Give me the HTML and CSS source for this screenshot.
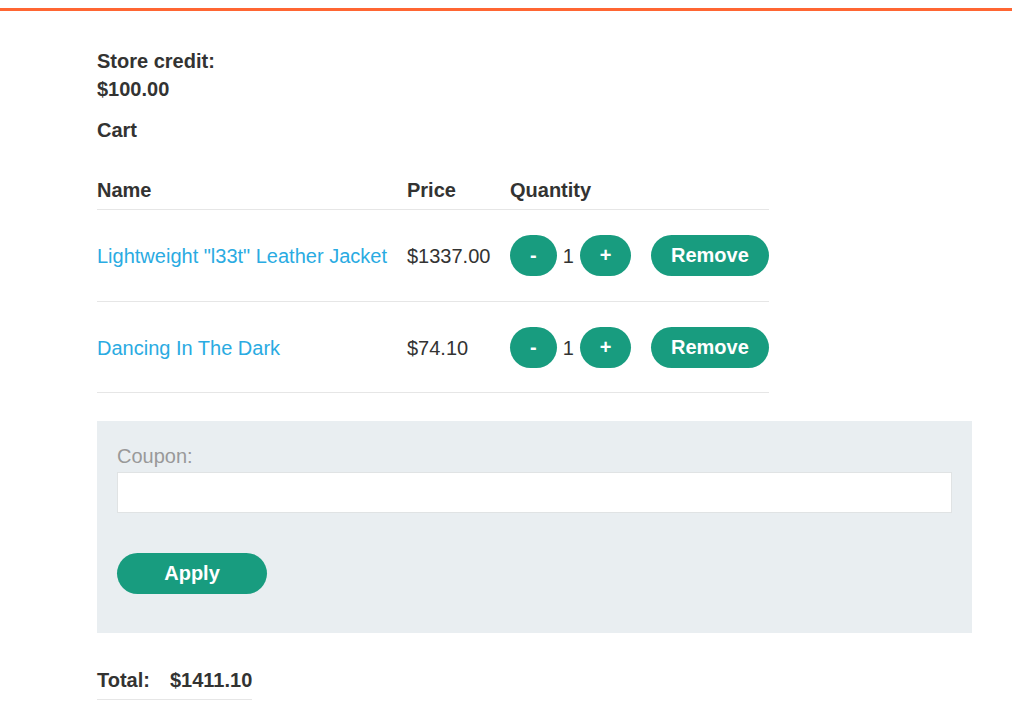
FILE: index.html
```html
<!DOCTYPE html>
<html>
<head>
<meta charset="utf-8">
<link rel="stylesheet" href="styles.css">
</head>
<body>
<div class="topbar"></div>
<main class="container">
  <div class="credit">
    <div>Store credit:</div>
    <div>$100.00</div>
  </div>
  <div class="cart-title">Cart</div>
  <table class="cart">
    <thead>
      <tr>
        <th class="c-name">Name</th>
        <th class="c-price">Price</th>
        <th class="c-qty">Quantity</th>
        <th class="c-rm"></th>
      </tr>
    </thead>
    <tbody>
      <tr>
        <td><a class="link" href="#">Lightweight "l33t" Leather Jacket</a></td>
        <td>$1337.00</td>
        <td><div class="qty"><button class="btn">-</button><span>1</span><button class="btn">+</button></div></td>
        <td><button class="btn">Remove</button></td>
      </tr>
      <tr>
        <td><a class="link" href="#">Dancing In The Dark</a></td>
        <td>$74.10</td>
        <td><div class="qty"><button class="btn">-</button><span>1</span><button class="btn">+</button></div></td>
        <td><button class="btn">Remove</button></td>
      </tr>
    </tbody>
  </table>
  <form class="coupon">
    <label class="coupon-label">Coupon:</label>
    <input class="coupon-input" type="text">
    <button class="btn btn-apply" type="button">Apply</button>
  </form>
  <table class="total">
    <tr>
      <th class="total-label">Total:</th>
      <th>$1411.10</th>
    </tr>
  </table>
</main>
</body>
</html>
```

FILE: styles.css
```css
html, body {
  margin: 0;
  padding: 0;
  background: #ffffff;
}

body {
  font-family: "Liberation Sans", Arial, sans-serif;
  font-size: 20px;
  line-height: 28px;
  color: #333332;
}

.topbar {
  margin-top: 8px;
  height: 3px;
  background: #ff6633;
}

.container {
  padding-left: 97px;
  width: 875px;
}

.credit {
  margin-top: 36px;
  font-weight: bold;
}

.cart-title {
  margin-top: 13px;
  font-weight: bold;
}

.cart {
  margin-top: 32px;
  border-collapse: collapse;
  width: 672px;
  table-layout: fixed;
}

.cart th {
  text-align: left;
  font-weight: bold;
  padding: 0 0 5px 0;
  border-bottom: 1px solid #e6e6e6;
}

.c-name { width: 310px; }
.c-price { width: 103px; }
.c-qty { width: 141px; }
.c-rm { width: 118px; }

.cart td {
  padding: 25px 0 25px 0;
  vertical-align: middle;
  border-bottom: 1px solid #e6e6e6;
  white-space: nowrap;
}

.cart tbody tr:last-child td {
  padding-bottom: 24px;
}

.qty {
  display: flex;
  align-items: center;
  gap: 6px;
}

.link {
  color: #2aabe2;
  text-decoration: none;
}

.btn {
  font-family: "Liberation Sans", Arial, sans-serif;
  font-size: 20px;
  font-weight: bold;
  color: #ffffff;
  background: #189c7f;
  border: none;
  border-radius: 25px;
  height: 41px;
  padding: 0 20px;
  line-height: 41px;
  vertical-align: middle;
  cursor: pointer;
}

.coupon {
  margin: 28px 0 0 0;
  background: #e9eef1;
  padding: 21px 20px 39px 20px;
  display: flex;
  flex-direction: column;
  align-items: flex-start;
}

.coupon-label {
  color: #999999;
  line-height: 28px;
}

.coupon-input {
  margin-top: 2px;
  box-sizing: border-box;
  width: 100%;
  height: 41px;
  border: 1px solid #e0e3e4;
  background: #ffffff;
  font-size: 20px;
}

.btn-apply {
  margin-top: 40px;
  width: 150px;
}

.total {
  margin-top: 33px;
  border-collapse: collapse;
}

.total th {
  text-align: left;
  font-weight: bold;
  padding: 0 0 5px 0;
  border-bottom: 1px solid #e6e6e6;
  white-space: nowrap;
}

.total .total-label {
  padding-right: 20px;
}
```
